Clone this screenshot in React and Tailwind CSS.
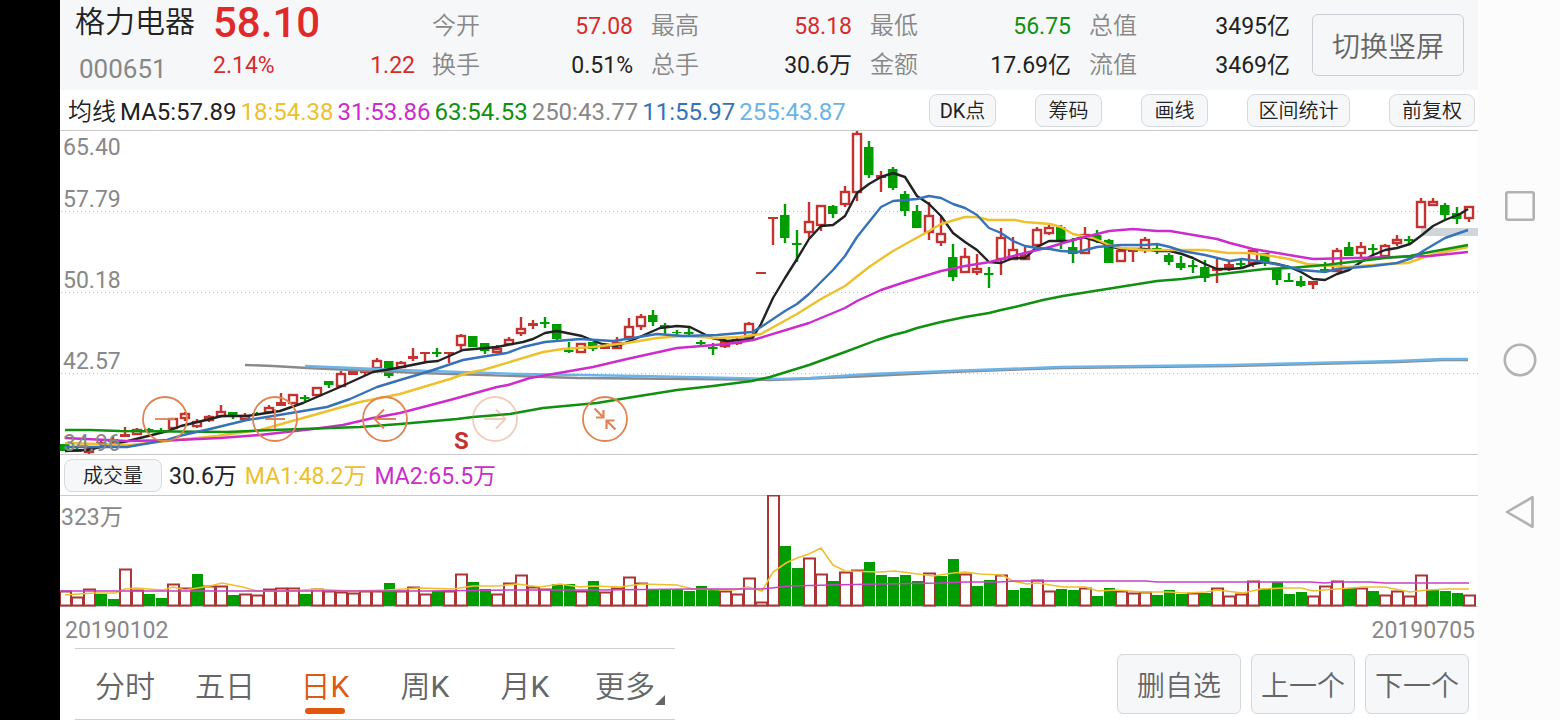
import React from "react";

const RED = "#c4332f";
const GREEN = "#009c00";

// One row per trading day: colour, high, body top, body bottom, low (screen y).
const CANDLES = [
  ["g", 444, 444, 451, 451], ["g", 447, 449, 452, 452], ["r", 446, 448, 453, 454], ["r", 440, 442, 445, 446], ["r", 437, 439, 442, 444],
  ["r", 427, 434, 437, 437], ["r", 428, 429, 435, 435], ["g", 428, 429, 431, 433], ["g", 428, 430, 431, 433], ["r", 418, 418, 429, 429],
  ["r", 412, 413, 419, 421], ["r", 419, 421, 427, 428], ["r", 415, 416, 421, 422], ["r", 405, 411, 417, 417], ["g", 412, 412, 417, 419],
  ["r", 413, 415, 420, 420], ["g", 412, 413, 415, 415], ["r", 405, 407, 413, 413], ["r", 393, 402, 406, 406], ["r", 394, 394, 404, 404],
  ["g", 395, 397, 399, 401], ["r", 387, 387, 396, 396], ["g", 381, 381, 385, 388], ["r", 371, 373, 387, 387], ["r", 371, 371, 375, 375],
  ["r", 371, 371, 373, 376], ["r", 358, 360, 369, 369], ["g", 361, 361, 376, 378], ["r", 361, 362, 368, 368], ["r", 348, 356, 359, 361],
  ["r", 352, 352, 354, 362], ["g", 348, 352, 354, 357], ["r", 352, 352, 354, 363], ["r", 334, 335, 346, 351], ["g", 336, 336, 347, 347],
  ["g", 343, 343, 351, 354], ["r", 345, 348, 353, 353], ["r", 337, 339, 345, 345], ["r", 317, 328, 334, 336], ["r", 320, 323, 326, 329],
  ["g", 317, 322, 324, 328], ["g", 324, 324, 339, 341], ["g", 342, 350, 352, 353], ["r", 343, 343, 353, 353], ["g", 342, 342, 349, 351],
  ["r", 346, 346, 349, 349], ["r", 337, 342, 349, 349], ["r", 318, 326, 338, 340], ["r", 314, 316, 327, 330], ["g", 310, 315, 322, 326],
  ["g", 323, 325, 327, 334], ["g", 330, 332, 333, 335], ["g", 328, 332, 334, 337], ["g", 340, 342, 344, 347], ["g", 343, 347, 349, 355],
  ["r", 339, 341, 347, 348], ["r", 338, 339, 344, 345], ["r", 322, 323, 338, 341], ["r", 272, 272, 274, 274], ["r", 217, 217, 219, 245],
  ["g", 204, 215, 238, 243], ["g", 230, 243, 245, 262], ["r", 202, 221, 233, 238], ["r", 205, 205, 226, 231], ["g", 205, 206, 214, 218],
  ["r", 186, 191, 205, 207], ["r", 130, 133, 193, 201], ["g", 141, 147, 175, 178], ["r", 171, 175, 178, 192], ["g", 167, 169, 188, 190],
  ["g", 191, 194, 211, 216], ["g", 205, 211, 228, 228], ["r", 202, 215, 233, 240], ["r", 217, 233, 243, 246], ["g", 244, 257, 277, 281],
  ["r", 248, 256, 273, 273], ["r", 254, 268, 273, 275], ["g", 267, 273, 275, 288], ["r", 228, 237, 260, 275], ["r", 237, 249, 260, 260],
  ["r", 247, 255, 260, 260], ["r", 227, 229, 246, 246], ["r", 224, 227, 234, 235], ["g", 225, 227, 241, 249], ["g", 238, 247, 254, 263],
  ["r", 227, 234, 254, 254], ["g", 230, 235, 240, 243], ["g", 239, 240, 263, 263], ["r", 249, 250, 262, 262], ["r", 250, 250, 252, 262],
  ["r", 237, 239, 251, 253], ["g", 244, 248, 250, 254], ["g", 253, 255, 262, 265], ["g", 256, 263, 268, 270], ["g", 260, 265, 267, 273],
  ["g", 260, 267, 278, 282], ["r", 259, 268, 271, 283], ["r", 261, 264, 268, 271], ["g", 260, 263, 265, 267], ["r", 250, 250, 264, 267],
  ["g", 253, 253, 262, 266], ["g", 268, 268, 280, 285], ["g", 273, 280, 282, 282], ["g", 276, 281, 286, 287], ["r", 281, 281, 285, 289],
  ["g", 262, 269, 271, 272], ["r", 248, 250, 272, 272], ["g", 242, 247, 256, 256], ["r", 242, 246, 254, 257], ["g", 244, 248, 250, 255],
  ["r", 244, 245, 257, 257], ["r", 235, 239, 244, 246], ["g", 236, 239, 241, 245], ["r", 198, 201, 228, 228], ["r", 198, 201, 206, 206],
  ["g", 203, 205, 215, 219], ["g", 207, 213, 219, 224], ["r", 206, 206, 219, 222],
];

// Top edge of each volume bar (screen y); the baseline is 606.
const VOLUMES = [
  591, 597, 589, 594, 599, 569, 590, 594, 598, 584, 588, 574, 586, 586, 595, 594, 595, 589, 588, 588,
  594, 589, 591, 592, 593, 591, 591, 583, 591, 587, 594, 591, 591, 574, 582, 589, 594, 583, 575, 587,
  589, 584, 584, 591, 581, 592, 588, 577, 583, 589, 590, 589, 591, 586, 589, 591, 594, 578, 602, 495,
  546, 568, 558, 574, 581, 572, 570, 562, 575, 577, 575, 581, 573, 576, 559, 574, 586, 580, 575, 590,
  588, 580, 591, 589, 590, 588, 596, 588, 591, 593, 592, 595, 590, 594, 593, 593, 588, 596, 594, 581,
  589, 582, 594, 592, 596, 586, 581, 588, 588, 591, 595, 591, 596, 575, 590, 591, 593, 595,
];
const GREEN_VOLUMES = new Set([
  3, 4, 7, 8, 11, 14, 20, 27, 31, 34, 35, 41, 42, 44, 49, 50, 51, 52, 53, 54, 60, 61, 64, 67, 68, 69, 70, 71, 73, 74,
  76, 77, 79, 80, 83, 84, 86, 87, 91, 92, 93, 95, 100, 101, 102, 103, 107, 109, 114, 115, 116,
]);

const PRICE_LINES = [
  { color: "#8a8a8e", points: "245,365 273,366 307,368 420,373 577,378 693,379 770,380 800,379 870,376 950,372 1060,368 1230,366 1312,364 1397,362 1443,360 1468,360" },
  { color: "#6ab4e8", points: "305,366 400,370 520,374 640,376 780,379 810,378 870,374 950,371 1060,367 1230,365 1312,363 1397,361 1443,359 1468,359" },
  { color: "#222222", points: "65,451 87,450 128,441 168,431 181,426 210,419 222,416 247,416 260,414 280,411 303,403 340,387 373,372 397,368 427,362 438,361 463,350 497,347 523,342 533,339 545,333 557,331 582,336 602,344 617,346 635,339 660,328 677,326 690,327 712,338 727,341 752,339 761,324 773,298 785,278 797,259 809,239 821,226 833,225 845,216 857,193 869,184 881,177 893,173 905,177 917,196 929,204 941,216 953,233 965,242 977,250 989,262 1001,263 1013,258 1025,258 1037,247 1049,241 1070,241 1083,237 1100,242 1109,246 1121,249 1145,249 1157,251 1170,251 1182,254 1193,258 1205,264 1217,269 1230,269 1242,268 1253,264 1265,262 1277,264 1289,267 1301,272 1313,279 1325,280 1337,274 1349,270 1361,262 1373,255 1385,250 1397,248 1410,244 1422,235 1433,226 1445,220 1460,214 1468,209" },
  { color: "#edc02c", points: "65,443 130,445 177,440 217,436 260,430 303,418 360,402 400,394 450,379 467,373 483,370 543,352 563,349 593,347 627,343 657,338 683,336 717,338 740,337 761,334 797,314 821,299 845,286 869,267 893,251 929,231 941,224 965,217 977,217 989,220 1015,220 1025,222 1050,224 1061,227 1073,234 1093,238 1109,245 1121,248 1145,250 1205,250 1228,253 1250,253 1265,255 1289,259 1307,264 1349,267 1385,264 1408,263 1430,255 1468,247" },
  { color: "#cc2ccc", points: "65,438 127,441 177,440 220,438 260,435 313,429 343,425 373,418 400,413 450,400 497,387 508,385 530,378 593,367 627,359 677,348 727,344 753,340 809,323 833,313 845,308 857,301 881,290 905,282 918,278 941,271 965,266 990,262 1025,253 1050,247 1073,240 1093,235 1109,231 1133,229 1157,231 1170,231 1217,239 1230,243 1253,249 1313,259 1397,257 1430,256 1468,252" },
  { color: "#109010", points: "65,430 90,430 120,431 227,432 273,430 360,427 400,424 457,419 473,417 510,414 543,408 597,403 627,398 677,390 713,386 752,381 770,377 809,365 845,352 877,340 893,335 905,332 917,328 941,322 965,317 989,313 1001,310 1019,306 1043,300 1063,296 1157,281 1182,279 1205,276 1230,273 1265,269 1290,268 1325,265 1385,258 1410,256 1430,252 1468,245" },
  { color: "#3572b8", points: "65,447 127,447 167,440 183,435 210,429 247,420 273,416 327,407 350,399 377,387 400,380 427,372 463,360 487,356 507,353 523,347 545,342 580,339 613,341 633,338 657,334 683,336 717,335 752,332 761,327 785,311 797,304 809,294 833,270 845,256 857,237 869,222 881,207 893,201 917,199 929,196 941,198 953,204 965,208 977,215 989,228 1001,233 1013,241 1025,246 1037,248 1050,249 1061,251 1078,252 1097,247 1121,245 1145,245 1157,244 1170,247 1182,251 1205,255 1230,261 1242,259 1265,262 1289,267 1301,270 1325,272 1337,269 1373,266 1397,263 1412,258 1423,251 1445,238 1468,230" },
];

const VOLUME_LINES = [
  { color: "#edc02c", points: "65,595 78,594 95,593 115,593 125,589 135,588 163,590 173,587 185,590 210,586 222,583 243,587 257,591 290,591 317,589 350,591 387,590 420,588 453,589 473,586 497,586 517,584 540,587 560,584 580,587 593,586 620,587 642,584 677,585 693,589 733,590 748,587 762,591 773,572 786,563 797,558 809,554 821,548 833,565 845,571 880,572 895,571 933,576 953,573 965,572 980,574 1002,575 1013,581 1027,584 1038,583 1063,587 1085,587 1098,591 1115,590 1143,592 1168,592 1185,593 1206,592 1217,590 1243,593 1261,589 1284,588 1301,588 1313,591 1336,589 1364,587 1385,587 1410,592 1427,590 1449,589 1469,589" },
  { color: "#c840c8", points: "60,591 430,591 510,590 600,590 690,589 762,589 790,586 830,585 880,584 940,583 965,582 1000,582 1015,581 1145,581 1158,582 1310,582 1325,583 1336,582 1370,582 1385,583 1469,583" },
];

const QUOTES = [
  [["今开", "57.08", "text-[#d62c2c]"], ["换手", "0.51%", "text-[#222]"]],
  [["最高", "58.18", "text-[#d62c2c]"], ["总手", "30.6万", "text-[#222]"]],
  [["最低", "56.75", "text-[#109010]"], ["金额", "17.69亿", "text-[#222]"]],
  [["总值", "3495亿", "text-[#222]"], ["流值", "3469亿", "text-[#222]"]],
];

const AVERAGES = [
  ["18:54.38", "text-[#edc02c]"],
  ["31:53.86", "text-[#cc2ccc]"],
  ["63:54.53", "text-[#109010]"],
  ["250:43.77", "text-[#888]"],
  ["11:55.97", "text-[#3572b8]"],
  ["255:43.87", "text-[#6ab4e8]"],
];

const TOOLS = [
  ["DK", "点", "w-[67px]"],
  ["", "筹码", "w-[67px]"],
  ["", "画线", "w-[67px]"],
  ["", "区间统计", "w-[103px]"],
  ["", "前复权", "w-[86px]"],
];

function Candle({ index, data }) {
  const [kind, high, top, bottom, low] = data;
  const x = 65 + index * 12;
  const color = kind === "g" ? GREEN : RED;
  const hollow = kind === "r" && bottom - top > 4;
  return (
    <g fill={color}>
      {high < top && <rect x={x - 1.2} y={high} width="2.4" height={top - high} />}
      {low > bottom && <rect x={x - 1.2} y={bottom} width="2.4" height={low - bottom} />}
      {hollow ? (
        <rect x={x - 4} y={top + 1} width="8" height={bottom - top - 2} fill="white" stroke={color} strokeWidth="2.4" />
      ) : (
        <rect x={x - 5} y={top} width={kind === "g" ? 9.5 : 10} height={bottom - top} />
      )}
    </g>
  );
}

function PriceChart() {
  return (
    <svg className="block h-[323px] w-full" viewBox="60 131 1418 323" preserveAspectRatio="none" aria-hidden="true">
      {[211, 292, 373].map((y) => (
        <line key={y} x1="61" x2="1478" y1={y + 0.5} y2={y + 0.5} stroke="#bdbdbd" strokeDasharray="1 3" />
      ))}
      <rect x="1421" y="228" width="57" height="8" fill="#d0d5da" />
      {CANDLES.map((c, i) => (
        <Candle key={i} index={i} data={c} />
      ))}
      {PRICE_LINES.map((l) => (
        <polyline key={l.color} points={l.points} fill="none" stroke={l.color} strokeWidth="2.4" strokeLinejoin="round" />
      ))}
    </svg>
  );
}

function VolumeChart() {
  return (
    <svg className="block h-[112px] w-full" viewBox="60 495 1418 112" preserveAspectRatio="none" aria-hidden="true">
      <line x1="60" x2="1478" y1="606.5" y2="606.5" stroke="#c9c9c9" />
      {VOLUMES.map((top, i) => {
        const x = 60 + i * 12;
        return GREEN_VOLUMES.has(i) ? (
          <rect key={i} x={x} y={top} width="11" height={606 - top} fill={GREEN} />
        ) : (
          <rect key={i} x={x} y={top + 0.5} width="11" height={605 - top} fill="white" stroke="#ab3434" strokeWidth="2" />
        );
      })}
      {VOLUME_LINES.map((l) => (
        <polyline key={l.color} points={l.points} fill="none" stroke={l.color} strokeWidth="1.6" />
      ))}
    </svg>
  );
}

const ROUND_BUTTONS = [
  ["缩小", "M13 23h20", ""],
  ["放大", "M13 23h20M23 13v20", ""],
  ["左移", "M34 23H13M22 13.500L12.500 23L22 32.500", ""],
  ["右移", "M12 23h21M24 13.500L33.500 23L24 32.500", "opacity-40"],
  ["收起", "M12.500 12.500L21 21M21.500 14V21.500H14M33.500 33.500L25 25M24.500 33V24.500H32.500", ""],
];

function RoundButton({ label, path, tone }) {
  return (
    <button type="button" aria-label={label} className={`size-[46px] ${tone}`}>
      <svg className="block size-full" viewBox="0 0 46 46" fill="none" stroke="#df8452">
        <circle cx="23" cy="23" r="22" strokeWidth="1.8" />
        <path d={path} strokeWidth={label === "收起" ? 2.2 : 1.8} />
      </svg>
    </button>
  );
}

function PriceLabel({ children, place }) {
  return <span className={`absolute left-[3px] text-[23px] leading-8 text-[#888] ${place}`}>{children}</span>;
}

const TABS = [["分时", ""], ["五日", ""], ["日", "K"], ["周", "K"], ["月", "K"], ["更多", ""]];

export default function App() {
  return (
    <div className="flex min-h-screen bg-white font-[Roboto,'Noto_Sans_CJK_SC',sans-serif] whitespace-nowrap text-[#222]">
      <div className="w-[60px] shrink-0 bg-black" />

      <main className="flex min-w-0 flex-1 flex-col">
        <header className="flex h-[90px] items-center bg-[#f6f7f9] pr-[14px] pl-[15px]">
          <div className="flex h-full w-[138px] shrink-0 flex-col">
            <h1 className="h-[46px] text-[30px] leading-[44px] font-[350]">格力电器</h1>
            <span className="pl-1 text-[26px] leading-[50px] text-[#888]">000651</span>
          </div>
          <div className="flex h-full w-[202px] shrink-0 flex-col text-[#d62c2c]">
            <span className="h-[46px] text-[42px] leading-[46px] font-medium text-[#e02a2a]">58.10</span>
            <div className="flex justify-between text-[23px] leading-[39px]">
              <span>2.14%</span>
              <span>1.22</span>
            </div>
          </div>
          <div className="ml-[17px] grid h-full flex-1 grid-cols-4 gap-[18px] pt-[7px]">
            {QUOTES.map((group) => (
              <dl key={group[0][0]} className="leading-[39px]">
                {group.map(([label, value, tone]) => (
                  <div key={label} className="flex justify-between">
                    <dt className="text-2xl leading-[39px] font-[350] text-[#888]">{label}</dt>
                    <dd className={`text-[23px] leading-[39px] ${tone}`}>{value}</dd>
                  </div>
                ))}
              </dl>
            ))}
          </div>
          <button type="button" className="ml-[22px] h-[62px] w-[152px] shrink-0 rounded-md border border-[#ccd0d6] pt-1.5 text-[28px] font-[350] text-[#666]">
            切换竖屏
          </button>
        </header>

        <section className="flex h-[41px] items-center justify-between border-b border-[#c9c9c9] pr-[3px] pl-2">
          <div className="flex gap-1 pt-1 text-2xl leading-8">
            <span className="font-[350]">均线</span>
            <span>MA5:57.89</span>
            {AVERAGES.map(([text, tone]) => (
              <span key={text} className={tone}>{text}</span>
            ))}
          </div>
          <div className="flex gap-[39px]">
            {TOOLS.map(([latin, text, width]) => (
              <button key={text} type="button" className={`h-[33px] rounded-lg border border-[#d6d9dd] bg-[#f6f7f9] pt-0.5 text-xl leading-none font-[350] ${width}`}>
                {latin && <span className="font-normal">{latin}</span>}
                {text}
              </button>
            ))}
          </div>
        </section>

        <section className="relative border-b border-[#c9c9c9]">
          <PriceChart />
          <PriceLabel place="top-px">65.40</PriceLabel>
          <PriceLabel place="top-[53px]">57.79</PriceLabel>
          <PriceLabel place="top-[134px]">50.18</PriceLabel>
          <PriceLabel place="top-[215px]">42.57</PriceLabel>
          <PriceLabel place="top-[297px]">34.96</PriceLabel>
          <span className="absolute top-[296px] left-[394px] text-2xl leading-7 font-bold text-[#c4332f]">S</span>
          <div className="absolute top-[265px] left-[82px] flex gap-16">
            {ROUND_BUTTONS.map(([label, path, tone]) => (
              <RoundButton key={label} label={label} path={path} tone={tone} />
            ))}
          </div>
        </section>

        <section className="flex h-[41px] items-center gap-[7px] border-b border-[#c9c9c9] pl-1 text-[23px]">
          <button type="button" className="h-[33px] w-[98px] rounded-lg border border-[#d6d9dd] bg-[#f6f7f9] pt-0.5 text-xl leading-none font-[350]">
            成交量
          </button>
          <div className="flex gap-2 pt-1 leading-8">
            <span>30.6万</span>
            <span className="text-[#edc02c]">MA1:48.2万</span>
            <span className="text-[#cc2ccc]">MA2:65.5万</span>
          </div>
        </section>

        <section className="relative -mt-px">
          <VolumeChart />
          <span className="absolute top-[7px] left-px text-[23px] leading-8 text-[#888]">323万</span>
          <div className="flex justify-between pt-2 pr-[3px] pl-[5px] text-[23px] leading-8 text-[#888]">
            <span>20190102</span>
            <span>20190705</span>
          </div>
        </section>

        <footer className="mt-auto flex items-start justify-between pr-[9px] pl-[15px]">
          <nav className="flex h-[72px] w-[600px] border-y border-[#ccd0d2]">
            {TABS.map(([text, latin]) => (
              <button
                key={text}
                type="button"
                className={`relative flex-1 pt-1.5 text-[30px] leading-none font-[350] ${text === "日" ? "text-[#dc5a14]" : "text-[#666]"}`}
              >
                {text}
                {latin && <span className="font-normal">{latin}</span>}
                {text === "日" && <span className="absolute bottom-[5px] left-[30px] h-[6px] w-10 rounded-full bg-[#e2570e]" />}
                {text === "更多" && (
                  <svg className="absolute right-[10px] bottom-[14px] size-[10px]" viewBox="0 0 10 10" fill="#666">
                    <path d="M10 0V10H0Z" />
                  </svg>
                )}
              </button>
            ))}
          </nav>
          <div className="flex gap-[10px] pt-[6px] text-[28px] font-[350] text-[#666]">
            <button type="button" className="h-[60px] w-[124px] rounded-md border border-[#d4d7db] bg-[#f6f7f9] pt-1.5">删自选</button>
            <button type="button" className="h-[60px] w-[104px] rounded-md border border-[#d4d7db] bg-[#f6f7f9] pt-1.5">上一个</button>
            <button type="button" className="h-[60px] w-[104px] rounded-md border border-[#d4d7db] bg-[#f6f7f9] pt-1.5">下一个</button>
          </div>
        </footer>
      </main>

      <aside className="flex w-[82px] shrink-0 flex-col items-center justify-center gap-[118px] bg-[#fcfcfc]">
        <button type="button" aria-label="最近任务" className="size-9">
          <svg viewBox="0 0 36 36" fill="none" stroke="#b2b2b2" strokeWidth="2.6">
            <rect x="5.300" y="4.300" width="27.400" height="27.400" rx="1.500" />
          </svg>
        </button>
        <button type="button" aria-label="主页" className="size-9">
          <svg viewBox="0 0 36 36" fill="none" stroke="#b2b2b2" strokeWidth="2.600">
            <circle cx="19" cy="18" r="15.200" />
          </svg>
        </button>
        <button type="button" aria-label="返回" className="size-9">
          <svg viewBox="0 0 36 36" fill="none" stroke="#b2b2b2" strokeWidth="2.600" strokeLinejoin="round">
            <path d="M31.500 1.200V30.800L6 16Z" />
          </svg>
        </button>
      </aside>
    </div>
  );
}
